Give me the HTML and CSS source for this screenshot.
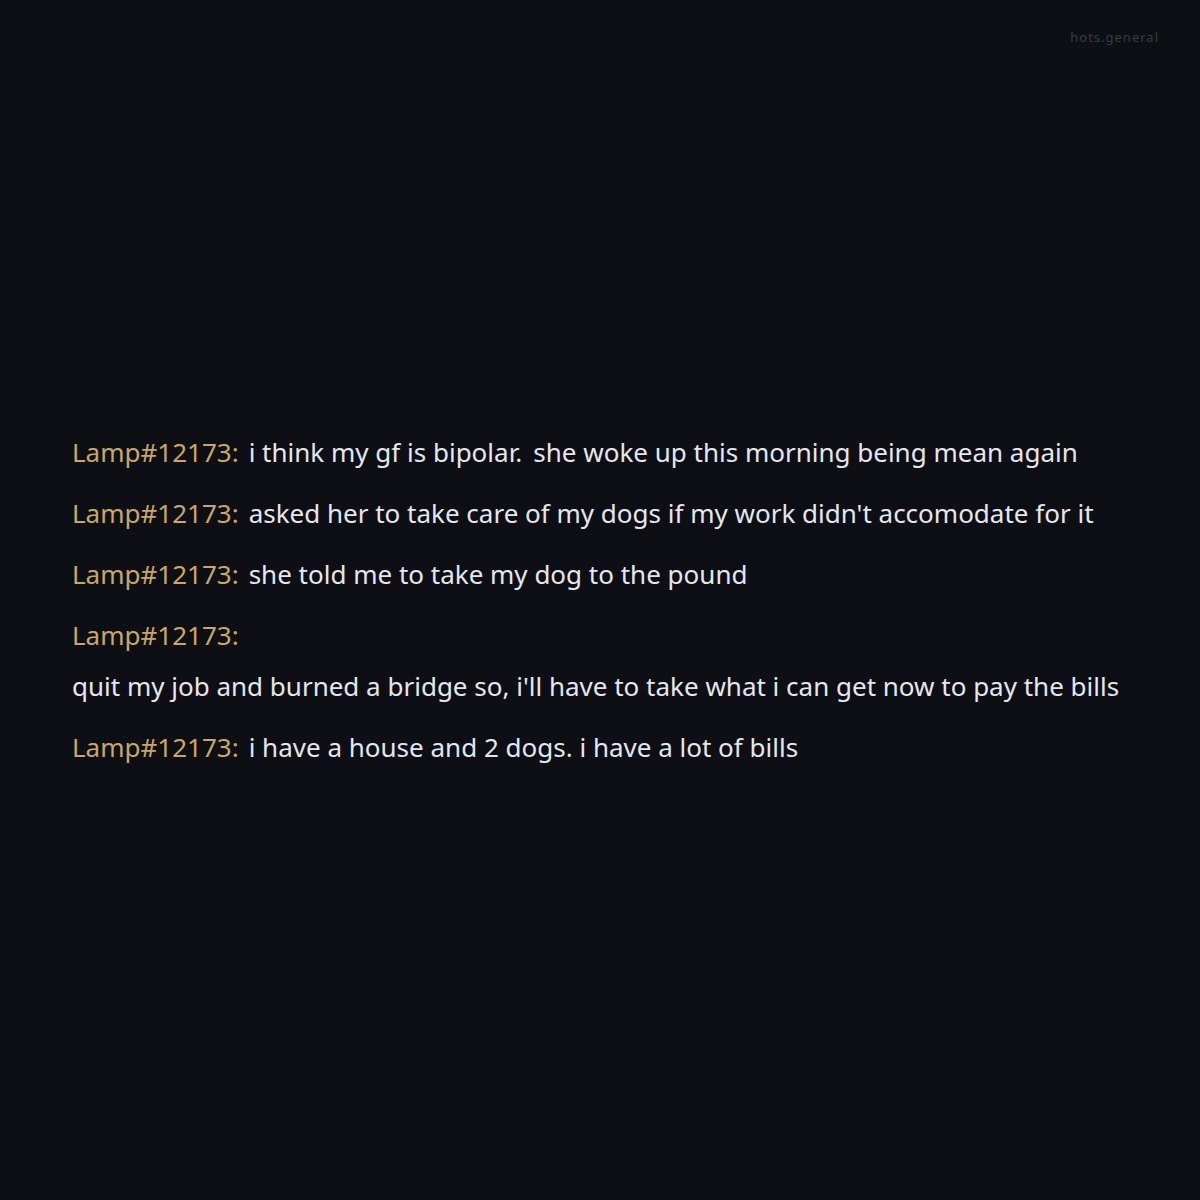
FILE: index.html
```html
<!DOCTYPE html>
<html>
<head>
<meta charset="utf-8">
<link rel="stylesheet" href="styles.css">
</head>
<body>
<div class="page">
  <div class="watermark">hots.general</div>
  <div class="chat">
    <div class="msg"><span class="user">Lamp#12173:</span><span class="text">i think my gf is bipolar.&#8201; she woke up this morning being mean again</span></div>
    <div class="msg"><span class="user">Lamp#12173:</span><span class="text">asked her to take care of my dogs if my work didn't accomodate for it</span></div>
    <div class="msg"><span class="user">Lamp#12173:</span><span class="text">she told me to take my dog to the pound</span></div>
    <div class="msg"><span class="user">Lamp#12173:</span><span class="text">quit my job and burned a bridge so, i'll have to take what i can get now to pay the bills</span></div>
    <div class="msg"><span class="user">Lamp#12173:</span><span class="text">i have a house and 2 dogs. i have a lot of bills</span></div>
  </div>
</div>
</body>
</html>
```
FILE: styles.css
```css
html, body {
  margin: 0;
  padding: 0;
  background: #0e0f14;
}
.page {
  position: relative;
  width: 1200px;
  height: 1200px;
  display: flex;
  flex-direction: column;
  justify-content: center;
  padding: 0 72px;
  box-sizing: border-box;
  font-family: "Noto Sans", sans-serif;
}
.watermark {
  position: absolute;
  top: 28px;
  right: 41px;
  font-size: 13px;
  letter-spacing: 1px;
  color: #353a48;
}
.chat {
  display: flex;
  flex-direction: column;
  gap: 22px;
}
.msg {
  display: flex;
  flex-wrap: wrap;
  column-gap: 10px;
  row-gap: 12px;
  font-size: 26px;
  line-height: 39px;
}
.user {
  color: #c8a865;
}
.text {
  color: #e4e7ee;
}
```
